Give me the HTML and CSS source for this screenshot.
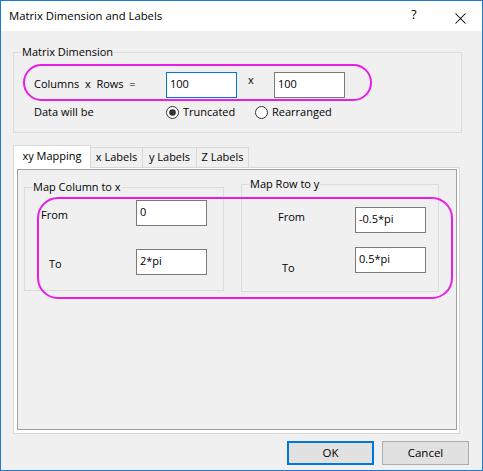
FILE: index.html
```html
<!DOCTYPE html>
<html lang="en">
<head>
<meta charset="utf-8">
<title>Matrix Dimension and Labels</title>
<link rel="stylesheet" href="styles.css">
</head>
<body>
<div class="window">
  <div class="titlebar">
    <span class="title">Matrix Dimension and Labels</span>
    <span class="help">?</span>
    <svg class="close" width="11" height="11" viewBox="0 0 11 11"><path d="M0.5 0.5 L10.5 10.5 M10.5 0.5 L0.5 10.5" stroke="#000" stroke-width="1.05" fill="none"/></svg>
  </div>
  <div class="content">
    <div class="group dim-group">
      <div class="group-label">Matrix Dimension</div>
      <div class="dim-row">
        <span class="dim-label">Columns  x  Rows  =</span>
        <div class="field focused">100</div>
        <span class="times">x</span>
        <div class="field">100</div>
      </div>
      <div class="data-row">
        <span class="data-label">Data will be</span>
        <label class="radio radio-first">
          <svg width="13" height="13" viewBox="0 0 13 13"><circle cx="6.5" cy="6.5" r="6" fill="#fff" stroke="#333" stroke-width="1"/><circle cx="6.5" cy="6.5" r="3.3" fill="#333"/></svg>
          Truncated
        </label>
        <label class="radio">
          <svg width="13" height="13" viewBox="0 0 13 13"><circle cx="6.5" cy="6.5" r="6" fill="#fff" stroke="#333" stroke-width="1"/></svg>
          Rearranged
        </label>
      </div>
    </div>

    <div class="tabs">
      <div class="tab active tab-xy">xy Mapping</div>
      <div class="tab tab-x">x Labels</div>
      <div class="tab tab-y">y Labels</div>
      <div class="tab tab-z">Z Labels</div>
    </div>
    <div class="tabpage">
      <div class="panel">
        <div class="group map-col">
          <div class="group-label">Map Column to x</div>
          <div class="map-row row-from">
            <span class="map-label">From</span>
            <div class="field">0</div>
          </div>
          <div class="map-row row-to">
            <span class="map-label">To</span>
            <div class="field">2*pi</div>
          </div>
        </div>
        <div class="group map-rowy">
          <div class="group-label">Map Row to y</div>
          <div class="map-row row-from">
            <span class="map-label">From</span>
            <div class="field">-0.5*pi</div>
          </div>
          <div class="map-row row-to">
            <span class="map-label">To</span>
            <div class="field">0.5*pi</div>
          </div>
        </div>
        <div class="mark"></div>
      </div>
    </div>

    <div class="buttons">
      <button class="btn default">OK</button>
      <button class="btn">Cancel</button>
    </div>
  </div>
</div>
</body>
</html>
```
FILE: styles.css
```css
* { box-sizing: border-box; }
html, body { margin: 0; padding: 0; }
body {
  font-family: "Open Sans", "Noto Sans", sans-serif;
  font-size: 11px;
  line-height: 16px;
  color: #000;
  background: #f0f0f0;
}
.window {
  width: 483px;
  height: 471px;
  border: 1px solid #1c7bd1;
  background: #f0f0f0;
  overflow: hidden;
}
.titlebar {
  height: 30px;
  background: #fff;
  display: flex;
  align-items: center;
  padding-left: 8px;
}
.title { flex: 1; font-size: 11.3px; }
.help {
  width: 12px;
  text-align: center;
  margin-right: 35px;
  margin-top: -3px;
  font-size: 12.5px;
}
.close { margin-right: 16px; margin-top: 4px; display: block; }

.content { padding-left: 12px; }

.group {
  border: 1px solid #dcdcdc;
}
.group-label {
  margin: -9px 0 0 7px;
  padding: 0 1px;
  width: fit-content;
  background: #f0f0f0;
  line-height: 16px;
}

.dim-group {
  width: 449px;
  margin-top: 21px;
  padding-bottom: 12px;
}
.dim-row {
  display: flex;
  align-items: flex-start;
  width: 349px;
  height: 37px;
  margin: 4px 0 0 9px;
  padding: 6px 0 0 9px;
  border: 2px solid #e81ee8;
  border-radius: 19px;
}
.dim-label { width: 132px; white-space: pre; margin-top: 4px; }
.times { width: 37px; padding-left: 11px; margin-top: 0; }

.field {
  width: 71px;
  height: 26px;
  border: 1px solid #7a7a7a;
  background: #fff;
  padding: 3px 3px 0;
  white-space: nowrap;
}
.field.focused { border-color: #0078d7; }

.data-row {
  display: flex;
  align-items: center;
  height: 16px;
  margin-top: 3px;
  padding-left: 20px;
}
.data-label { width: 132px; }
.radio {
  display: flex;
  align-items: center;
  gap: 4px;
}
.radio svg { display: block; margin-top: 1px; }
.radio-first { width: 89px; }

.tabs {
  display: flex;
  align-items: flex-end;
  height: 22px;
  margin-top: 12px;
}
.tab {
  height: 20px;
  border-top: 1px solid #d9d9d9;
  border-right: 1px solid #d9d9d9;
  background: #f0f0f0;
  text-align: center;
  line-height: 18px;
}
.tab.active {
  position: relative;
  z-index: 1;
  height: 23px;
  margin-bottom: -1px;
  border-left: 1px solid #d9d9d9;
  background: #fff;
  line-height: 20px;
}
.tab-xy { width: 78px; }
.tab-x { width: 52px; }
.tab-y { width: 54px; }
.tab-z { width: 52px; }

.tabpage {
  width: 447px;
  height: 267px;
  border: 1px solid #d9d9d9;
  background: #fff;
  padding: 1px 2px 3px 3px;
}
.panel {
  position: relative;
  height: 100%;
  border: 1px solid #a0a0a0;
  background: #f0f0f0;
  display: flex;
  align-items: flex-start;
  padding-left: 6px;
}
.map-col {
  width: 200px;
  margin-top: 17px;
  padding-bottom: 15px;
}
.map-rowy {
  width: 198px;
  margin-top: 14px;
  margin-left: 17px;
  padding-bottom: 15px;
}
.map-row { display: flex; align-items: flex-start; }

.map-col .row-from { margin-top: 5px; }
.map-col .row-from .map-label { margin: 7px 0 0 16px; width: 95px; }
.map-col .row-to { margin-top: 23px; }
.map-col .row-to .map-label { margin: 7px 0 0 24px; width: 87px; }

.map-rowy .row-from { margin-top: 15px; }
.map-rowy .row-from .map-label { margin: 2px 0 0 36px; width: 77px; }
.map-rowy .row-to { margin-top: 14px; }
.map-rowy .row-to .map-label { margin: 13px 0 0 40px; width: 73px; }

.mark {
  position: absolute;
  left: 19px;
  top: 27px;
  width: 416px;
  height: 102px;
  border: 2px solid #e81ee8;
  border-radius: 21px;
  pointer-events: none;
}

.buttons {
  display: flex;
  justify-content: flex-end;
  gap: 8px;
  margin-top: 7px;
  padding-right: 13px;
}
.btn {
  width: 87px;
  height: 24px;
  background: #e1e1e1;
  border: 1px solid #adadad;
  font: inherit;
  font-size: 11.5px;
  color: #000;
  padding: 0;
}
.btn.default { border: 2px solid #0078d7; }
```
